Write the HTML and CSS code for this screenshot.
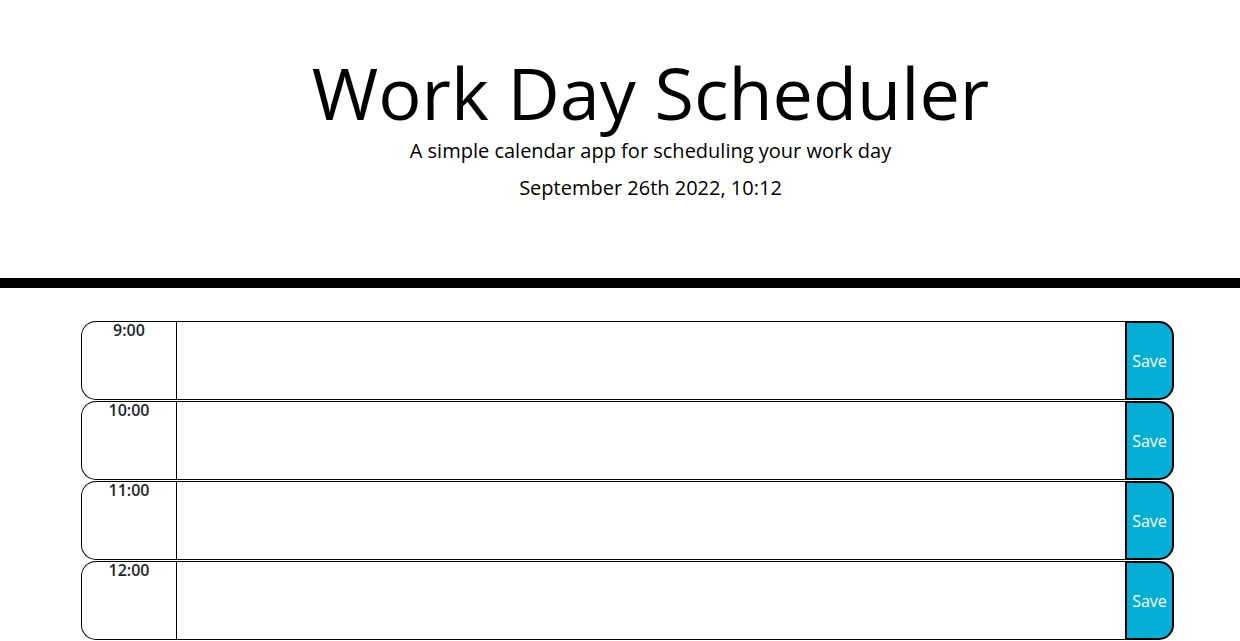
FILE: index.html
```html
<!DOCTYPE html>
<html lang="en">
<head>
<meta charset="utf-8">
<title>Work Day Scheduler</title>
<link rel="stylesheet" href="styles.css">
</head>
<body>
<header class="jumbotron">
  <h1 class="title">Work Day Scheduler</h1>
  <p class="lead">A simple calendar app for scheduling your work day</p>
  <p class="lead date">September 26th 2022, 10:12</p>
</header>
<main class="schedule">
  <div class="time-block">
    <div class="hour">9:00</div>
    <textarea class="description"></textarea>
    <button class="saveBtn">Save</button>
  </div>
  <div class="time-block">
    <div class="hour">10:00</div>
    <textarea class="description"></textarea>
    <button class="saveBtn">Save</button>
  </div>
  <div class="time-block">
    <div class="hour">11:00</div>
    <textarea class="description"></textarea>
    <button class="saveBtn">Save</button>
  </div>
  <div class="time-block">
    <div class="hour">12:00</div>
    <textarea class="description"></textarea>
    <button class="saveBtn">Save</button>
  </div>
</main>
</body>
</html>
```

FILE: styles.css
```css
* { box-sizing: border-box; }
html, body { margin: 0; padding: 0; }
body {
  font-family: "Open Sans", "Noto Sans", sans-serif;
  font-size: 16px;
  line-height: 1;
  color: #212529;
  background: #fff;
  overflow: hidden;
}
.jumbotron {
  text-align: center;
  color: #000;
  padding: 49px 0 75px 61px;
  border-bottom: 10px solid #000;
  display: flex;
  flex-direction: column;
}
.title {
  margin: 0;
  font-size: 72px;
  line-height: 86px;
  font-weight: 400;
}
.lead {
  margin: 1px 0 0;
  font-size: 20px;
  line-height: 30px;
  font-weight: 400;
}
.lead.date { margin-top: 7px; }
.schedule {
  display: flex;
  flex-direction: column;
  gap: 1px;
  padding: 33px 0 0 81px;
}
.time-block {
  display: flex;
  width: 1093px;
  height: 79px;
}
.hour {
  width: 95px;
  flex: none;
  text-align: center;
  border: 1px solid #000;
  border-right: none;
  border-radius: 15px 0 0 15px;
  color: #212529;
  font-weight: 600;
  padding-top: 0;
  white-space: nowrap;
}
.description {
  flex: 1;
  margin: 0;
  background: transparent;
  border: 1px solid #000;
  border-right: none;
  resize: none;
  padding: 10px;
  font: inherit;
}
.saveBtn {
  width: 49px;
  flex: none;
  margin: 0;
  padding: 0;
  background: #06aed5;
  color: #fff;
  border: 2px solid #000;
  border-radius: 0 15px 15px 0;
  font: inherit;
  font-size: 16px;
}
```
